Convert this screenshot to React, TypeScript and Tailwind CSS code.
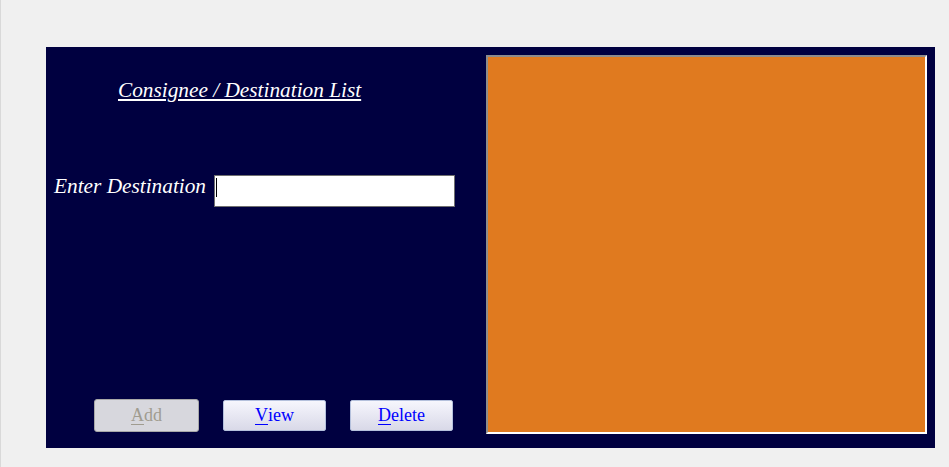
import React from "react";

const serif = { fontFamily: '"Liberation Serif", "Times New Roman", serif' };

function FormButton({ label, disabled = false }: { label: string; disabled?: boolean }) {
  const first = label.slice(0, 1);
  const rest = label.slice(1);
  if (disabled) {
    return (
      <button
        type="button"
        disabled
        className="flex h-[33px] w-[105px] items-center justify-center rounded-[3px] border border-[#a8a8a8] bg-[#d7d7dd] text-[18px] leading-[21px] text-[#a09c90]"
        style={serif}
      >
        <span className="underline decoration-[#a09c90] underline-offset-[3px]">{first}</span>
        {rest}
      </button>
    );
  }
  return (
    <button
      type="button"
      className="flex h-[31px] w-[103px] items-center justify-center rounded-[2px] border border-[#b4c0dc] bg-gradient-to-b from-[#f6f6fd] to-[#d9d9e8] text-[18px] leading-[21px] text-[#0000ff]"
      style={serif}
    >
      <span className="underline underline-offset-[3px]">{first}</span>
      {rest}
    </button>
  );
}

export default function App() {
  return (
    <div className="min-h-[467px] w-full border-l border-[#d9d9d9] bg-[#f0f0f0] pl-[45px] pt-[47px]">
      <div className="flex h-[401px] w-[889px] bg-[#000040] pb-[14px] pr-[8px] pt-[8px]">
        {/* left form column */}
        <div className="flex w-[440px] flex-col pl-[8px]" style={serif}>
          <h1 className="ml-[64px] mt-[24px] text-[21.3px] italic leading-[23px] text-white underline underline-offset-[2px]">
            Consignee / Destination List
          </h1>

          <div className="mt-[73px] flex items-start gap-[8px]">
            <label className="text-[21.3px] italic leading-[23px] text-white">Enter Destination</label>
            <div className="relative">
              <input
                type="text"
                className="h-[32px] w-[241px] border border-[#6f6f6f] bg-white px-[2px] text-[16px] caret-transparent outline-none"
              />
              <span className="absolute left-[2px] top-[3px] h-[19px] w-px bg-black" />
            </div>
          </div>

          <div className="mt-auto mb-[2px] ml-[40px] flex items-center gap-[24px]">
            <FormButton label="Add" disabled />
            <FormButton label="View" />
            <FormButton label="Delete" />
          </div>
        </div>

        {/* orange preview area */}
        <div className="flex-1 border-2 border-b-[#ffffff] border-l-[#8c8c8c] border-r-[#ffffff] border-t-[#8c8c8c] bg-[#e07a1f]" />
      </div>
    </div>
  );
}
